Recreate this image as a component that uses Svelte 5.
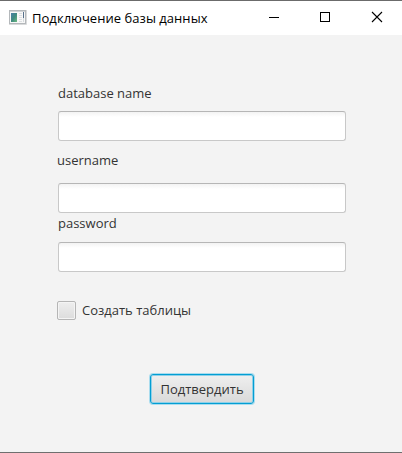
<script>
  let fields = $state([
    { id: 'database', label: 'database name', value: '' },
    { id: 'username', label: 'username', value: '' },
    { id: 'password', label: 'password', value: '' }
  ]);
  let createTables = $state(false);
</script>

<div class="window">
  <header>
    <svg class="app" width="18" height="16" viewBox="0 0 18 16">
      <defs>
        <linearGradient id="pic" x1="0" y1="0" x2="1" y2="1">
          <stop offset="0" stop-color="#4a7fa8" />
          <stop offset=".5" stop-color="#3f8a80" />
          <stop offset="1" stop-color="#6dbb80" />
        </linearGradient>
      </defs>
      <rect x=".5" y="1.5" width="16" height="13" fill="#f8f8f8" stroke="#b4b8bb" />
      <path d="M0 15.5h17.5V1" fill="none" stroke="#d9dadb" />
      <path d="M1 2.5h15" stroke="#d0d3d5" />
      <rect x="2" y="4" width="6" height="9" fill="url(#pic)" />
      <path d="M10 4.5h3M10 6.5h3M10 8.5h3M10 10.5h3M10 12.5h3" stroke="#dcdfe1" />
      <path d="M14.5 3v6" stroke="#56708a" />
      <path d="M14.5 9v4" stroke="#d5dadd" />
    </svg>
    <span class="title">Подключение базы данных</span>
    <div class="controls">
      <svg width="52" height="34" shape-rendering="crispEdges"><path d="M19 16.5h10" stroke="#000" /></svg>
      <svg width="52" height="34" shape-rendering="crispEdges"><rect x="18.5" y="11.5" width="9" height="9" fill="none" stroke="#000" /></svg>
      <svg width="48" height="34"><path d="M18 11l10 10M28 11l-10 10" stroke="#000" stroke-width="1.1" /></svg>
    </div>
  </header>
  <main>
    {#each fields as field}
      <div class="field {field.id}">
        <label for={field.id}>{field.label}</label>
        <input id={field.id} type={field.id === 'password' ? 'password' : 'text'} bind:value={field.value} />
      </div>
    {/each}
    <label class="check">
      <input type="checkbox" bind:checked={createTables} />
      <span>Создать таблицы</span>
    </label>
    <button>Подтвердить</button>
  </main>
</div>

<style>
  :global(body) { margin: 0; }
  .window {
    box-sizing: border-box;
    width: 402px;
    height: 453px;
    border-top: 1px solid #6b6b6b;
    border-bottom: 1px solid #6f6f6f;
    background: #f3f3f3;
    color: #333;
    font: 13px/20px "Open Sans", "Noto Sans", sans-serif;
    white-space: nowrap;
    overflow: hidden;
  }
  header { display: flex; height: 34px; background: #fff; color: #000; }
  .app { margin: 8px 0 0 9px; flex: none; }
  .title { margin: 7px 0 0 5px; letter-spacing: .04px; }
  .controls { display: flex; margin-left: auto; flex: none; }
  main { display: flex; flex-direction: column; align-items: flex-start; padding: 48px 0 0 58px; }
  .field { display: flex; flex-direction: column; }
  .field label { height: 20px; }
  .field input {
    box-sizing: border-box;
    width: 288px;
    height: 30px;
    margin: 8px 0 0;
    padding: 4px 7px;
    border: 1px solid #c8c8c8;
    border-top-color: #b6b6b6;
    border-radius: 3px;
    outline: none;
    background: linear-gradient(#f3f3f3, #fff 5px);
    font: inherit;
    color: inherit;
  }
  .username { margin-top: 9px; }
  .username label { margin-left: -1px; }
  .username input { margin-top: 13px; }
  .password input { margin-top: 9px; }
  .check { display: flex; align-items: center; height: 20px; margin: 28px 0 0 -1px; }
  .check input {
    appearance: none;
    box-sizing: border-box;
    width: 19px;
    height: 19px;
    margin: 0 6px 0 0;
    border: 1px solid #b5b5b5;
    border-radius: 2px;
    background: linear-gradient(#eee, #dcdcdc);
    box-shadow: inset 0 0 0 1px #f4f4f4;
  }
  button {
    box-sizing: border-box;
    width: 104px;
    height: 30px;
    margin: 54px 0 0 92px;
    padding: 0;
    border: 1px solid #039ed3;
    border-radius: 3px;
    background: linear-gradient(#efefef, #d9d9d9);
    box-shadow: 0 0 0 1px #a9dcee, inset 0 0 0 1px #8fd0e8;
    color: #333;
    font: inherit;
  }
</style>
